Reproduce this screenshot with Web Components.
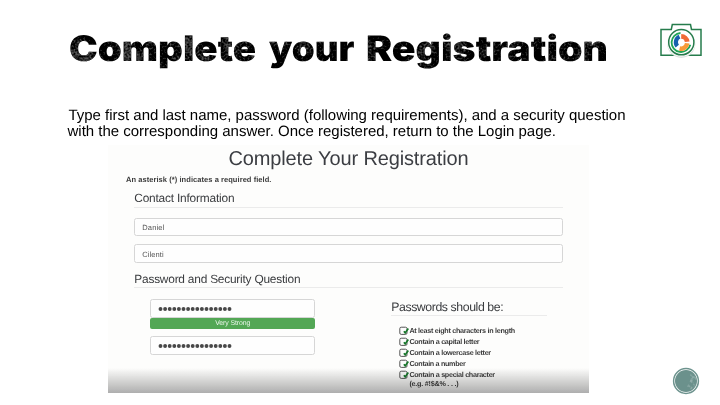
<!DOCTYPE html>
<html lang="en"><head><meta charset="utf-8"><title>Complete your Registration</title>
<style>html,body{margin:0;width:720px;height:405px;overflow:hidden;background:#fff}</style></head>
<body><registration-slide></registration-slide>
<script>
const define = (name, html, ready) => customElements.define(name, class extends HTMLElement {
  connectedCallback() {
    if (this.shadowRoot) return;
    const t = document.createElement('template');
    t.innerHTML = html;
    this.attachShadow({mode: 'open'}).append(t.content.cloneNode(true));
    if (ready) ready(this, this.shadowRoot);
  }
});

/* One line of text, tracked so that it spans the given width. */
define('fit-text', `<style>:host{display:block;white-space:nowrap;text-rendering:geometricPrecision}span{display:inline-block}</style><span></span>`, (el, root) => {
  const s = root.querySelector('span'), text = el.getAttribute('text');
  s.textContent = text;
  const w = s.getBoundingClientRect().width;
  s.style.letterSpacing = (Number(el.getAttribute('width')) - w) / text.length + 'px';
});

define('slide-title', `<style>:host{display:block;height:50px}svg{display:block}
text{font-family:Inter,"Liberation Sans",sans-serif;font-weight:900;font-size:35.2px;fill:#000;text-rendering:geometricPrecision}</style>
<svg width="560" height="50" viewBox="60 25 560 50">
<filter id="worn" x="0" y="0" width="100%" height="100%" color-interpolation-filters="sRGB"><feTurbulence type="fractalNoise" baseFrequency=".5" numOctaves="3" seed="8"/>
<feColorMatrix values="1 0 0 0 0  0 1 0 0 0  0 0 1 0 0  0 0 0 0 1" result="n"/>
<feTurbulence type="fractalNoise" baseFrequency=".045" numOctaves="2" seed="5"/>
<feColorMatrix values="1 0 0 0 0  0 1 0 0 0  0 0 1 0 0  0 0 0 0 1" result="big"/>
<feComposite in="n" in2="big" operator="arithmetic" k2=".55" k3=".5" result="mix"/>
<feColorMatrix in="mix" values="0 0 0 0 .32  0 0 0 0 .32  0 0 0 0 .32  5 0 0 0 -2.5" result="specks"/>
<feComposite in="specks" in2="SourceGraphic" operator="in" result="cut"/>
<feMerge><feMergeNode in="SourceGraphic"/><feMergeNode in="cut"/></feMerge></filter>
<g filter="url(#worn)"><text x="69" y="61" textLength="187" lengthAdjust="spacingAndGlyphs">Complete</text><text x="269" y="61" textLength="85.5" lengthAdjust="spacingAndGlyphs">your</text><text x="366" y="61" textLength="242" lengthAdjust="spacingAndGlyphs">Registration</text></g></svg>`);

define('camera-logo', `<style>:host{display:block}svg{display:block}</style>
<svg width="46" height="42" viewBox="658 20 46 42" fill="none">
<path d="M661 29.5h10.3l1-5h18.2l1 5H701V55.3h-40z" stroke="#267c4c" stroke-width="1.5"/>
<circle cx="681.3" cy="43.9" r="14" fill="#dfe3e1"/><circle cx="681.3" cy="42.6" r="14" fill="#fff"/>
<circle cx="681.3" cy="42.2" r="12.6" stroke="#267c4c" stroke-width="1.5"/>
<path d="M680.5 33a9.5 9.5 0 1 0 9.8 11.8" stroke="#20a557" stroke-width="1.8"/>
<path d="M679.5 36.6a6.2 6.2 0 0 0-2.2 9.6" stroke="#1761ad" stroke-width="4.2"/>
<path d="M681.2 36.4a6.2 6.2 0 0 1 6 5.4" stroke="#f06a35" stroke-width="4.8"/>
<path d="M687.2 43.3a6.2 6.2 0 0 1-7.6 5.2" stroke="#f89a38" stroke-width="4.6"/></svg>`);

define('page-dot', `<style>:host{display:block}svg{display:block}</style>
<svg width="28" height="28" viewBox="0 0 28 28"><defs><filter id="r" x="0" y="0" width="1" height="1"><feTurbulence type="fractalNoise" baseFrequency=".32" numOctaves="2" seed="4"/><feColorMatrix values="0 0 0 0 .6 0 0 0 0 .7 0 0 0 0 .69 3 0 0 0 -1.3"/><feComposite in2="SourceGraphic" operator="in"/></filter></defs>
<circle cx="14" cy="14" r="12.4" fill="#fff" stroke="#6d938e" stroke-width="1.5"/><circle cx="14" cy="14" r="11" fill="#6b918c"/><path d="M18 6q5 2 7 7l-2 6-5 4-3-4 3-5z" fill="#fff" opacity=".4" filter="url(#r)"/></svg>`);

define('form-input', `<style>:host{display:flex;align-items:center;box-sizing:border-box;height:18.6px;border:1.4px solid #d6d6d6;border-radius:2.5px;padding:1px 0 0 7px;background:#fefefe;color:#555;font-size:7.5px;line-height:17px}</style><slot></slot>`);

define('section-heading', `<style>:host{display:block;box-sizing:border-box;height:17px;border-bottom:1px solid #ebebeb;color:#393b3e;line-height:17px;font-size:11.9px}</style><slot></slot>`);

define('secret-dots', `<style>:host{display:block}svg{display:block}</style><svg width="75" height="6" fill="#484848">` + Array.from({length: 16}, (_, i) => `<circle cx="${2.5 + i * 4.6}" cy="3" r="1.95"/>`).join('') + `</svg>`);

define('strength-bar', `<style>:host{display:flex;justify-content:center;height:11.2px;border-radius:2px;background:#53a755;color:#eef8ee;font-size:6.9px;line-height:11.5px}</style><slot></slot>`);

define('check-item', `<style>:host{display:flex;align-items:center;height:10.85px;font-weight:bold;font-size:7.2px;line-height:10px;color:#3c3c3c}svg{flex:none;width:10.2px;height:10px}</style>
<svg viewBox="0 0 10.2 10" fill="none"><rect x=".8" y="1.2" width="7.2" height="7.2" rx="1.4" fill="#fcfcfc" stroke="#565656" stroke-width="1"/><path d="M4.9 5.3 6.2 6.9 9.3 2.5" stroke="#16772a" stroke-width="1.7"/></svg><slot></slot>`);

define('registration-form', `<style>
:host{display:block;position:relative;box-sizing:border-box;width:481px;height:248px;margin-left:108px;background:#fdfdfc;color:#3b3b3b}
.h{margin-left:120.5px;padding-top:1px;font-size:20px;line-height:26px;height:24px;color:#3b3d42}
.note{margin:5px 0 0 18px;font-size:7.5px;font-weight:bold;line-height:9px;height:9px}
.main{margin:6.7px 26px 0 26.3px}
.main > section-heading:first-child{line-height:15.6px}
.inputs{display:grid;gap:8px;margin:10px 0 8.1px}
.cols{display:grid;grid-template-columns:165px 156px;column-gap:76px;padding:11px 0 0 15.9px}
.pw form-input:last-child{margin-top:7.4px}
.rules section-heading{height:17px;font-size:12.3px;line-height:16.4px}
.rules ul{margin:10.1px 0 0 8px;padding:0}
.eg{margin-left:10.2px;font-size:7.2px;font-weight:bold;line-height:8px}
.fade{position:absolute;inset:auto 0 0;height:25px;background:linear-gradient(#b0b0b000,#b0b0b0);pointer-events:none;mix-blend-mode:multiply}
</style>
<fit-text class="h" text="Complete Your Registration" width="240"></fit-text>
<fit-text class="note" text="An asterisk (*) indicates a required field." width="145.5"></fit-text>
<div class="main">
<section-heading><fit-text text="Contact Information" width="100"></fit-text></section-heading>
<div class="inputs"><form-input><fit-text text="Daniel" width="22"></fit-text></form-input><form-input><fit-text text="Cilenti" width="21.5"></fit-text></form-input></div>
<section-heading><fit-text text="Password and Security Question" width="166"></fit-text></section-heading>
<div class="cols"><div class="pw"><form-input><secret-dots></secret-dots></form-input><strength-bar><fit-text text="Very Strong" width="35"></fit-text></strength-bar><form-input><secret-dots></secret-dots></form-input></div>
<div class="rules"><section-heading><fit-text text="Passwords should be:" width="112"></fit-text></section-heading>
<ul><check-item><fit-text text="At least eight characters in length" width="105.5"></fit-text></check-item><check-item><fit-text text="Contain a capital letter" width="70"></fit-text></check-item><check-item><fit-text text="Contain a lowercase letter" width="81.5"></fit-text></check-item><check-item><fit-text text="Contain a number" width="56"></fit-text></check-item><check-item><fit-text text="Contain a special character" width="85.5"></fit-text></check-item>
<fit-text class="eg" text="(e.g. #!$&amp;% . . .)" width="49"></fit-text></ul></div></div></div>
<div class="fade"></div>`);

define('registration-slide', `<style>
:host{display:block;position:relative;width:720px;height:405px;overflow:hidden;background:#fff;font-family:"Liberation Sans",Arial,sans-serif}
header{display:flex;height:82px;padding-left:60px}
slide-title{margin-top:25px;width:560px}camera-logo{margin:20px 0 0 38px}
.copy{padding:26px 0 0 67.5px;font-size:15px;line-height:16px;height:37px;color:#000}
.copy fit-text:first-child{margin-left:1px}
page-dot{position:absolute;right:20px;bottom:10px}
</style>
<header><slide-title></slide-title><camera-logo></camera-logo></header>
<div class="copy"><fit-text text="Type first and last name, password (following requirements), and a security question" width="557"></fit-text><fit-text text="with the corresponding answer. Once registered, return to the Login page." width="488.5"></fit-text></div>
<registration-form></registration-form><page-dot></page-dot>`);
</script></body></html>
